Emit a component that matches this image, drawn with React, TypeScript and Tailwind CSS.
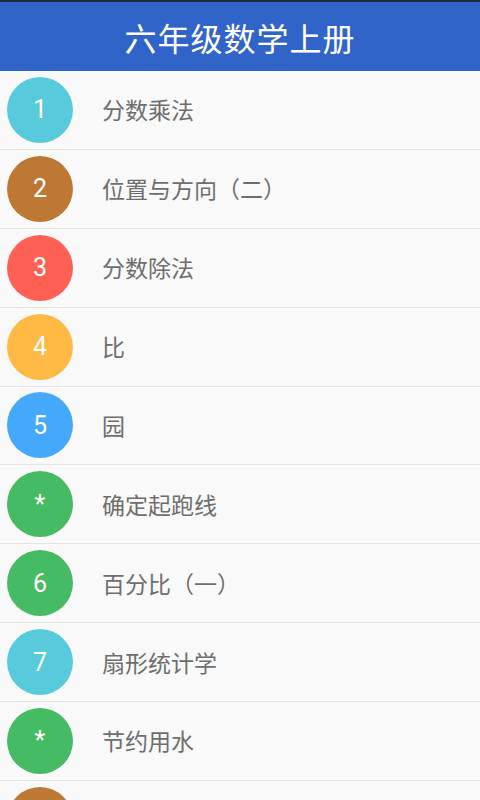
import React from 'react';

type Lesson = { mark: string; title: string; color: string };

const lessons: Lesson[] = [
  { mark: '1', title: '分数乘法', color: 'bg-[#57cadb]' },
  { mark: '2', title: '位置与方向（二）', color: 'bg-[#bd7834]' },
  { mark: '3', title: '分数除法', color: 'bg-[#fe6153]' },
  { mark: '4', title: '比', color: 'bg-[#ffb945]' },
  { mark: '5', title: '园', color: 'bg-[#45a9fb]' },
  { mark: '*', title: '确定起跑线', color: 'bg-[#45bb63]' },
  { mark: '6', title: '百分比（一）', color: 'bg-[#45bb63]' },
  { mark: '7', title: '扇形统计学', color: 'bg-[#57cadb]' },
  { mark: '*', title: '节约用水', color: 'bg-[#45bb63]' },
  { mark: '8', title: '百分比（二）', color: 'bg-[#bd7834]' },
];

const cjk = { fontFamily: '"Noto Sans CJK SC", "Roboto", sans-serif' };

export default function App() {
  return (
    <div className="w-[480px] h-[800px] overflow-hidden bg-[#f9f9f9] flex flex-col" style={cjk}>
      {/* 状态栏残留 */}
      <div className="h-[2px] bg-[#1b2a48] shrink-0" />

      {/* 标题栏 */}
      <div className="h-[69px] shrink-0 bg-[#3164c9] flex items-center justify-center">
        <h1 className="text-white text-[32px] leading-none tracking-[1px]">六年级数学上册</h1>
      </div>

      {/* 列表 */}
      <ul className="flex flex-col">
        {lessons.map((lesson, index) => (
          <li
            key={index}
            className="h-[78.875px] shrink-0 flex items-center border-b border-[#e4e4e4] bg-[#f9f9f9]"
          >
            <div
              className={`ml-[7px] w-[66px] h-[66px] rounded-full ${lesson.color} flex items-center justify-center text-white text-[25px] leading-none`}
              style={{ fontFamily: 'Roboto, "Noto Sans", sans-serif' }}
            >
              {lesson.mark}
            </div>
            <span className="ml-[29px] text-[23px] text-[#6e6e6e] leading-none">{lesson.title}</span>
          </li>
        ))}
      </ul>
    </div>
  );
}
